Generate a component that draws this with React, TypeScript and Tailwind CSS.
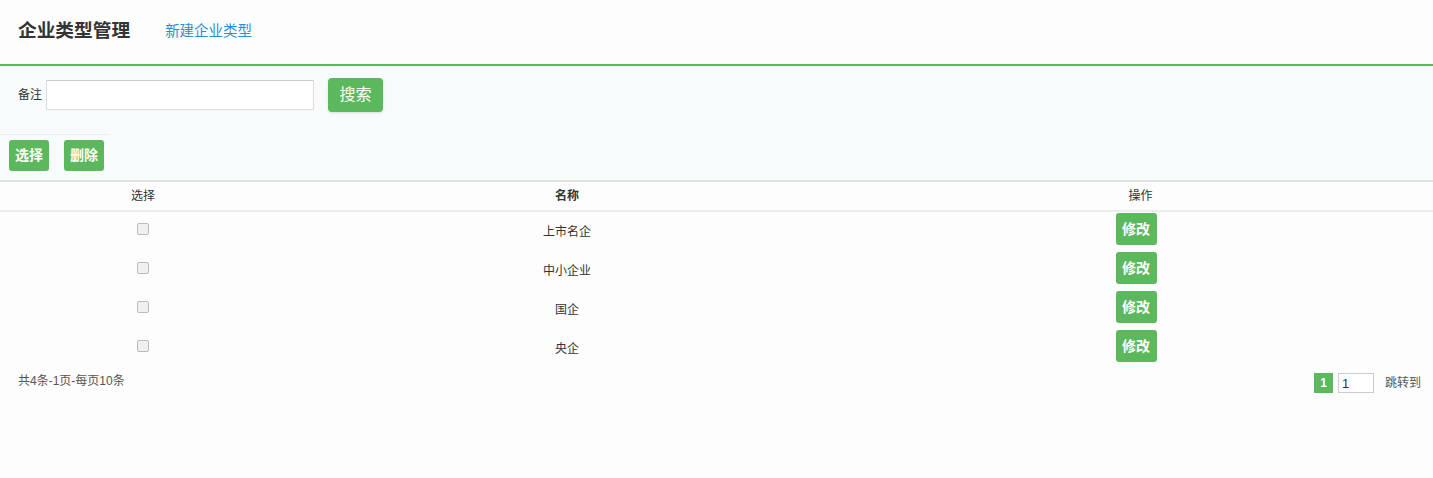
import React from 'react'

const rows = ['上市名企', '中小企业', '国企', '央企']

const font = { fontFamily: '"Liberation Sans", "Noto Sans CJK SC", sans-serif' }

export default function App() {
  return (
    <div className="w-[1433px] h-[478px] bg-[#fcfdfc] text-[#333] overflow-hidden" style={font}>
      {/* 标题栏 */}
      <div className="h-[66px] flex items-center pl-[18px] pb-[2px] border-b-2 border-[#5cb85c]">
        <h1 className="text-[18.7px] font-bold text-[#333] leading-none">企业类型管理</h1>
        <a href="#" className="ml-[35px] text-[14.5px] text-[#2b8fd8] leading-none">新建企业类型</a>
      </div>

      {/* 搜索区 */}
      <div className="bg-[#f7fbfc] h-[114px] flex flex-col">
        <div className="h-[58px] flex items-center pl-[18px]">
          <span className="text-[12px] text-[#333] mr-[4px]">备注</span>
          <input
            className="w-[268px] h-[30px] border border-[#ddd] border-t-[#ccc] bg-white outline-none"
          />
          <button className="ml-[14px] w-[55px] h-[34px] rounded-[4px] bg-[#5cb85c] text-white text-[16px] shadow-sm">
            搜索
          </button>
        </div>
        <div className="mt-[10px] w-[110px] border-t border-[#eeeeee]" />
        <div className="flex items-center gap-[15px] pl-[9px] pt-[5px]">
          <button className="w-[40px] h-[31px] rounded-[3px] bg-[#5cb85c] text-white text-[14px] font-bold">选择</button>
          <button className="w-[40px] h-[31px] rounded-[3px] bg-[#5cb85c] text-white text-[14px] font-bold">删除</button>
        </div>
      </div>

      {/* 表格 */}
      <table className="w-full border-collapse text-[12px]">
        <thead>
          <tr className="h-[30px] border-t-2 border-[#e2e2e2] border-b-2 border-b-[#ececec]">
            <th className="w-[286px] font-normal text-center">选择</th>
            <th className="w-[562px] font-bold text-center">名称</th>
            <th className="font-normal text-center">操作</th>
          </tr>
        </thead>
        <tbody>
          {rows.map((name) => (
            <tr key={name} className="h-[39px]">
              <td className="text-center align-middle">
                <input
                  type="checkbox"
                  className="w-[12px] h-[12px] mb-[6px] appearance-none border border-[#bbb] rounded-[2px] bg-[#f0f0f0] align-middle"
                />
              </td>
              <td className="text-center align-middle text-[#333]">{name}</td>
              <td className="align-top text-center pt-[1px] pb-[6px] pr-[9px]">
                <button className="w-[41px] h-[32px] rounded-[3px] bg-[#5cb85c] text-white text-[14px] font-bold">修改</button>
              </td>
            </tr>
          ))}
        </tbody>
      </table>

      {/* 分页 */}
      <div className="flex items-start justify-between pl-[18px] pr-[12px] pt-[4px]">
        <span className="text-[12px] text-[#555]">共4条-1页-每页10条</span>
        <div className="flex items-center mt-[1px]">
          <span className="w-[19px] h-[20px] bg-[#5cb85c] text-white text-[12px] font-bold flex items-center justify-center">1</span>
          <input
            defaultValue="1"
            className="ml-[5px] w-[36px] h-[20px] border border-[#ccc] bg-white text-[13px] pl-[3px] outline-none"
          />
          <span className="ml-[11px] text-[12px] text-[#555]">跳转到</span>
        </div>
      </div>
    </div>
  )
}
